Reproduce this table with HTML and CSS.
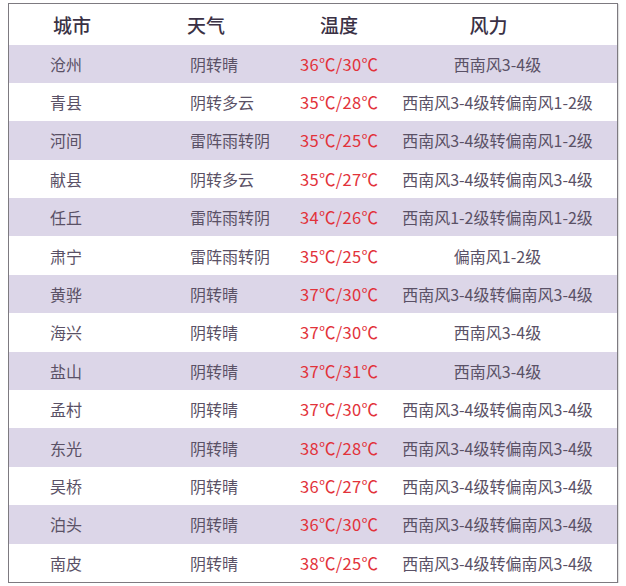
FILE: index.html
```html
<!DOCTYPE html>
<html lang="zh">
<head>
<meta charset="utf-8">
<link rel="stylesheet" href="styles.css">
</head>
<body>
<div class="table">
  <div class="row head">
    <div class="c1">城市</div><div class="c2">天气</div><div class="c3">温度</div><div class="c4">风力</div>
  </div>
  <div class="row alt"><div class="c1">沧州</div><div class="c2">阴转晴</div><div class="c3">36℃/30℃</div><div class="c4">西南风3-4级</div></div>
  <div class="row"><div class="c1">青县</div><div class="c2">阴转多云</div><div class="c3">35℃/28℃</div><div class="c4">西南风3-4级转偏南风1-2级</div></div>
  <div class="row alt"><div class="c1">河间</div><div class="c2">雷阵雨转阴</div><div class="c3">35℃/25℃</div><div class="c4">西南风3-4级转偏南风1-2级</div></div>
  <div class="row"><div class="c1">献县</div><div class="c2">阴转多云</div><div class="c3">35℃/27℃</div><div class="c4">西南风3-4级转偏南风3-4级</div></div>
  <div class="row alt"><div class="c1">任丘</div><div class="c2">雷阵雨转阴</div><div class="c3">34℃/26℃</div><div class="c4">西南风1-2级转偏南风1-2级</div></div>
  <div class="row"><div class="c1">肃宁</div><div class="c2">雷阵雨转阴</div><div class="c3">35℃/25℃</div><div class="c4">偏南风1-2级</div></div>
  <div class="row alt"><div class="c1">黄骅</div><div class="c2">阴转晴</div><div class="c3">37℃/30℃</div><div class="c4">西南风3-4级转偏南风3-4级</div></div>
  <div class="row"><div class="c1">海兴</div><div class="c2">阴转晴</div><div class="c3">37℃/30℃</div><div class="c4">西南风3-4级</div></div>
  <div class="row alt"><div class="c1">盐山</div><div class="c2">阴转晴</div><div class="c3">37℃/31℃</div><div class="c4">西南风3-4级</div></div>
  <div class="row"><div class="c1">孟村</div><div class="c2">阴转晴</div><div class="c3">37℃/30℃</div><div class="c4">西南风3-4级转偏南风3-4级</div></div>
  <div class="row alt"><div class="c1">东光</div><div class="c2">阴转晴</div><div class="c3">38℃/28℃</div><div class="c4">西南风3-4级转偏南风3-4级</div></div>
  <div class="row"><div class="c1">吴桥</div><div class="c2">阴转晴</div><div class="c3">36℃/27℃</div><div class="c4">西南风3-4级转偏南风3-4级</div></div>
  <div class="row alt"><div class="c1">泊头</div><div class="c2">阴转晴</div><div class="c3">36℃/30℃</div><div class="c4">西南风3-4级转偏南风3-4级</div></div>
  <div class="row"><div class="c1">南皮</div><div class="c2">阴转晴</div><div class="c3">38℃/25℃</div><div class="c4">西南风3-4级转偏南风3-4级</div></div>
</div>
</body>
</html>
```
FILE: styles.css
```css
html, body {
  margin: 0;
  padding: 0;
  background: #ffffff;
}
body {
  padding: 3px 0 0 8px;
  font-family: "Noto Sans CJK SC", "Liberation Sans", sans-serif;
}
.table {
  width: 608px;
  border: 1px solid #7d7a80;
  box-shadow: 1px 1px 1px rgba(0,0,0,0.12);
  background: #fff;
}
.row {
  display: grid;
  grid-template-columns: 181px 110px 78px 1fr;
  height: 38.4px;
  align-items: center;
  font-size: 16px;
  color: #5a5166;
  white-space: nowrap;
}
.row.alt {
  background: #dcd6e8;
}
.row.head {
  height: 40.5px;
  font-size: 19px;
  font-weight: 500;
  color: #3a3145;
}
.c1 { padding-left: 41px; }
.row.head .c1 { padding-left: 44px; }
.row.head .c2 { text-indent: -3px; }
.row.head .c3 { text-indent: 20px; }
.row.head .c4 { text-indent: -18px; }
.c3 { color: #e2323a; font-size: 16.5px; letter-spacing: 0.3px; }
.row.head .c3 { color: #3a3145; letter-spacing: 0; font-size: 19px; }
.c4 { text-align: center; }
```
